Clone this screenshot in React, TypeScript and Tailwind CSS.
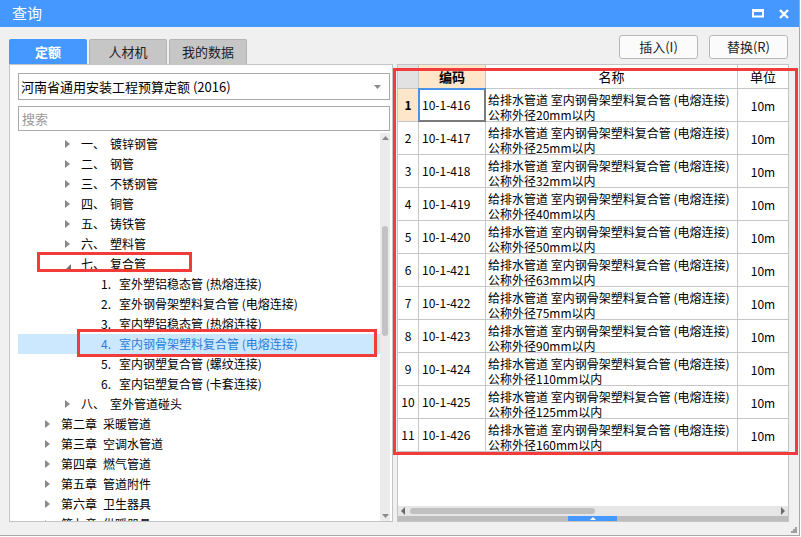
import React from 'react';

type Node = {
  level: 1 | 2 | 3;
  arrow?: 'right' | 'down';
  num: string;
  name: string;
  selected?: boolean;
};

const tree: Node[] = [
  { level: 2, arrow: 'right', num: '一、', name: '镀锌钢管' },
  { level: 2, arrow: 'right', num: '二、', name: '钢管' },
  { level: 2, arrow: 'right', num: '三、', name: '不锈钢管' },
  { level: 2, arrow: 'right', num: '四、', name: '铜管' },
  { level: 2, arrow: 'right', num: '五、', name: '铸铁管' },
  { level: 2, arrow: 'right', num: '六、', name: '塑料管' },
  { level: 2, arrow: 'down', num: '七、', name: '复合管' },
  { level: 3, num: '1.', name: '室外塑铝稳态管 (热熔连接)' },
  { level: 3, num: '2.', name: '室外钢骨架塑料复合管 (电熔连接)' },
  { level: 3, num: '3.', name: '室内塑铝稳态管 (热熔连接)' },
  { level: 3, num: '4.', name: '室内钢骨架塑料复合管 (电熔连接)', selected: true },
  { level: 3, num: '5.', name: '室内钢塑复合管 (螺纹连接)' },
  { level: 3, num: '6.', name: '室内铝塑复合管 (卡套连接)' },
  { level: 2, arrow: 'right', num: '八、', name: '室外管道碰头' },
  { level: 1, arrow: 'right', num: '第二章', name: '采暖管道' },
  { level: 1, arrow: 'right', num: '第三章', name: '空调水管道' },
  { level: 1, arrow: 'right', num: '第四章', name: '燃气管道' },
  { level: 1, arrow: 'right', num: '第五章', name: '管道附件' },
  { level: 1, arrow: 'right', num: '第六章', name: '卫生器具' },
  { level: 1, arrow: 'right', num: '第七章', name: '供暖器具' },
];

const indent = { 1: 'pl-[27px]', 2: 'pl-[47px]', 3: 'pl-[83px]' };
const numWidth = { 1: 'w-[42px]', 2: 'w-[29px]', 3: 'w-[18px]' };

const rows = [20, 25, 32, 40, 50, 63, 75, 90, 110, 125, 160].map((d, i) => ({
  code: `10-1-${416 + i}`,
  d,
}));

const Arrow = ({ dir }: { dir: 'right' | 'down' }) =>
  dir === 'right' ? (
    <svg width="5" height="8" viewBox="0 0 5 8">
      <polygon points="0,0 5,4 0,8" fill="#8a8a8a" />
    </svg>
  ) : (
    <svg width="6" height="6" viewBox="0 0 6 6" className="mt-[5px]">
      <polygon points="6,0 6,6 0,6" fill="#707070" />
    </svg>
  );

const TreeRow = ({ n }: { n: Node }) => (
  <div
    className={`flex items-center h-[20px] text-[12px] whitespace-nowrap ${indent[n.level]} ${
      n.selected ? 'bg-[#cce8ff] text-[#2a7bd9]' : 'text-black'
    }`}
  >
    {n.arrow && (
      <span className="w-[16px] flex items-center">
        <Arrow dir={n.arrow} />
      </span>
    )}
    <span className={numWidth[n.level]}>{n.num}</span>
    <span>{n.name}</span>
  </div>
);

export default function App() {
  return (
    <div className="relative w-[800px] h-[536px] bg-[#f0f0f0] border-r border-b border-[#a8a8a8] flex flex-col font-['Noto_Sans_CJK_SC',sans-serif] text-black select-none">
      {/* title bar */}
      <div className="h-[27px] bg-[#4598ff] flex items-center pl-[12px] pr-[10px] shrink-0">
        <span className="text-white text-[15px]">查询</span>
        <div className="ml-auto flex items-center gap-[15px]">
          <svg width="12" height="9" viewBox="0 0 12 9">
            <rect x="1" y="1.5" width="10" height="6" fill="none" stroke="white" strokeWidth="2" />
            <rect x="0" y="0" width="12" height="3" fill="white" />
          </svg>
          <svg width="10" height="10" viewBox="0 0 10 10">
            <path d="M1 1 L9 9 M9 1 L1 9" stroke="white" strokeWidth="2.4" />
          </svg>
        </div>
      </div>

      {/* tabs + buttons */}
      <div className="h-[37px] flex pl-[9px] pr-[11px] shrink-0">
        <div className="flex items-end gap-[2px]">
          <div className="w-[78px] h-[25px] bg-[#4598ff] rounded-t-[2px] flex items-center justify-center text-white font-bold text-[13px]">
            定额
          </div>
          <div className="w-[78px] h-[25px] bg-[#c6c6c6] border border-b-0 border-[#b4b4b4] rounded-t-[2px] flex items-center justify-center text-[#222] text-[13px]">
            人材机
          </div>
          <div className="w-[78px] h-[25px] bg-[#c6c6c6] border border-b-0 border-[#b4b4b4] rounded-t-[2px] flex items-center justify-center text-[#222] text-[13px]">
            我的数据
          </div>
        </div>
        <div className="ml-auto mt-[8px] flex gap-[11px]">
          <button className="w-[79px] h-[24px] bg-[#fbfbfb] border border-[#b8b8b8] rounded-[3px] text-[13px] text-[#222]">
            插入(I)
          </button>
          <button className="w-[79px] h-[24px] bg-[#fbfbfb] border border-[#b8b8b8] rounded-[3px] text-[13px] text-[#222]">
            替换(R)
          </button>
        </div>
      </div>

      {/* panels */}
      <div className="h-[458px] flex gap-[4px] pl-[9px] shrink-0">
        {/* left panel */}
        <div className="w-[384px] bg-white border border-[#c4c4c4] flex flex-col pl-[8px] pr-[2px] pt-[8px]">
          <div className="h-[27px] border border-[#a9a9a9] flex items-center pl-[2px] pr-[8px] text-[13px] shrink-0">
            <span>河南省通用安装工程预算定额 (2016)</span>
            <svg width="7" height="4" viewBox="0 0 7 4" className="ml-auto">
              <polygon points="0,0 7,0 3.5,4" fill="#8a8a8a" />
            </svg>
          </div>
          <div className="h-[25px] mt-[6px] border border-[#a9a9a9] flex items-center pl-[3px] text-[13px] text-[#9a9a9a] shrink-0">
            搜索
          </div>
          <div className="flex-1 flex mt-[2px] min-h-0">
            <div className="flex-1 overflow-hidden pt-[1px]">
              {tree.map((n, i) => (
                <TreeRow key={i} n={n} />
              ))}
            </div>
            <div className="w-[10px] bg-[#ebebeb] flex flex-col items-center pt-[3px] pb-[3px]">
              <svg width="7" height="4" viewBox="0 0 7 4">
                <polygon points="0,4 7,4 3.5,0" fill="#8a8a8a" />
              </svg>
              <div className="w-[6px] h-[110px] bg-[#c2c2c2] rounded-[3px] mt-[86px]" />
              <svg width="7" height="4" viewBox="0 0 7 4" className="mt-auto">
                <polygon points="0,0 7,0 3.5,4" fill="#8a8a8a" />
              </svg>
            </div>
          </div>
        </div>

        {/* right panel: table */}
        <div className="w-[392px] bg-white border border-[#c4c4c4] flex flex-col text-[12px]">
          <div className="flex h-[24px] border-b border-[#c6c6c6] text-[13px] shrink-0">
            <div className="w-[21px] bg-[#e2e2e2] border-r border-[#c6c6c6]" />
            <div className="w-[67px] bg-[#fde6c9] border-r border-[#c6c6c6] flex items-center justify-center font-bold">
              编码
            </div>
            <div className="w-[252px] border-r border-[#c6c6c6] flex items-center justify-center">名称</div>
            <div className="flex-1 flex items-center justify-center">单位</div>
          </div>
          {rows.map((r, i) => (
            <div key={r.code} className="flex h-[33px] border-b border-[#c6c6c6] shrink-0">
              <div
                className={`w-[21px] border-r border-[#c6c6c6] flex items-center justify-center ${
                  i === 0 ? 'bg-[#fde6c9] font-bold' : ''
                }`}
              >
                {i + 1}
              </div>
              <div className="relative w-[67px] border-r border-[#c6c6c6] flex items-center pl-[3px]">
                {r.code}
                {i === 0 && (
                  <div className="absolute left-[-1px] top-[-1px] right-[-1px] bottom-[-1px] border-2 border-t-[#4a92ea] border-l-[#4a92ea] border-b-[#7a7a7a] border-r-[#7a7a7a]" />
                )}
              </div>
              <div className="w-[252px] border-r border-[#c6c6c6] pl-[2px] pt-[3px] leading-[15px] whitespace-nowrap">
                <div>给排水管道 室内钢骨架塑料复合管 (电熔连接)</div>
                <div>公称外径{r.d}mm以内</div>
              </div>
              <div className="flex-1 flex items-center justify-center pt-[2px]">10m</div>
            </div>
          ))}
          <div className="flex-1" />
          <div className="h-[10px] bg-[#e6e6e6] flex items-center px-[3px] shrink-0">
            <svg width="4" height="8" viewBox="0 0 4 8">
              <polygon points="4,0 4,8 0,4" fill="#6a6a6a" />
            </svg>
            <div className="w-[185px] h-[6px] bg-[#c0c0c0] rounded-[3px] ml-[5px]" />
            <svg width="4" height="8" viewBox="0 0 4 8" className="ml-auto">
              <polygon points="0,0 0,8 4,4" fill="#6a6a6a" />
            </svg>
          </div>
          <div className="h-[5px] bg-[#bdbdbd] flex shrink-0">
            <div className="ml-[170px] w-[49px] bg-[#4598ff] flex items-center justify-center">
              <svg width="6" height="3" viewBox="0 0 6 3">
                <polygon points="0,3 6,3 3,0" fill="white" />
              </svg>
            </div>
          </div>
        </div>
      </div>

      {/* resize grip */}
      <svg width="6" height="6" viewBox="0 0 6 6" className="absolute right-[2px] bottom-[2px]">
        <rect x="4" y="0" width="2" height="2" fill="#a0a0a0" />
        <rect x="2" y="2" width="2" height="2" fill="#a0a0a0" />
        <rect x="4" y="2" width="2" height="2" fill="#a0a0a0" />
        <rect x="0" y="4" width="2" height="2" fill="#a0a0a0" />
        <rect x="2" y="4" width="2" height="2" fill="#a0a0a0" />
        <rect x="4" y="4" width="2" height="2" fill="#a0a0a0" />
      </svg>

      {/* red annotation boxes */}
      <div className="absolute left-[37px] top-[252px] w-[155px] h-[20px] border-[3px] border-[#f23c3c]" />
      <div className="absolute left-[77px] top-[329px] w-[300px] h-[28px] border-[3px] border-[#f23c3c]" />
      <div className="absolute left-[393px] top-[68px] w-[405px] h-[387px] border-[3px] border-[#f23c3c]" />
    </div>
  );
}
